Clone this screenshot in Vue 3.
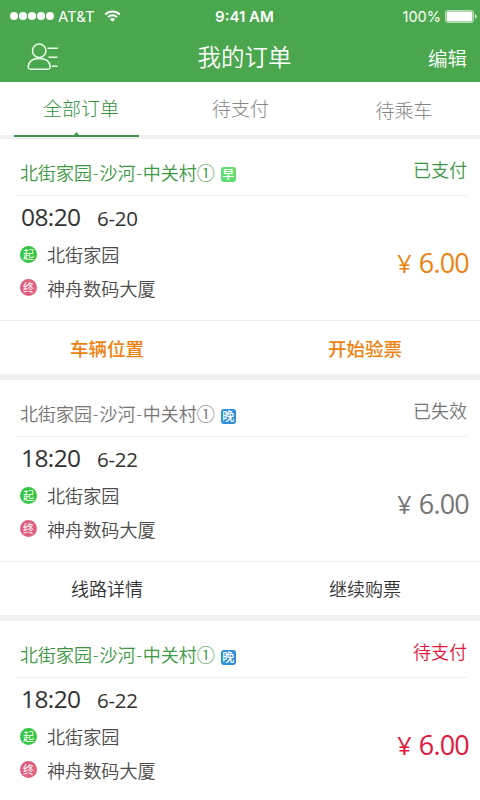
<script setup>
import { ref } from 'vue'

const tabs = ['全部订单', '待支付', '待乘车']
const active = ref(0)

const orders = ref([
  {
    id: 1, theme: 'paid', status: '已支付', shift: '早', time: '08:20', date: '6-20',
    actions: ['车辆位置', '开始验票']
  },
  {
    id: 2, theme: 'expired', status: '已失效', shift: '晚', time: '18:20', date: '6-22',
    actions: ['线路详情', '继续购票']
  },
  {
    id: 3, theme: 'unpaid', status: '待支付', shift: '晚', time: '18:20', date: '6-22',
    actions: []
  }
])
const route = ['北街家园', '沙河', '中关村①']
</script>

<template>
  <div class="page">
    <header class="header">
      <div class="status-bar">
        <div class="carrier">
          <i v-for="n in 5" :key="n" class="dot"></i>
          <span class="carrier-name">AT&amp;T</span>
          <svg class="wifi" viewBox="0 0 17 12">
            <path d="M1.2 4.5a10.4 10.4 0 0 1 14.6 0M3.9 7.1a6.6 6.6 0 0 1 9.2 0" fill="none" stroke="#fff" stroke-width="1.8" />
            <path d="M8.5 11.8L5.9 9.2a3.7 3.7 0 0 1 5.2 0z" fill="#fff" />
          </svg>
        </div>
        <div class="clock">9:41 AM</div>
        <div class="power">
          <span>100%</span>
          <svg class="battery" viewBox="0 0 32 13">
            <rect x=".5" y=".5" width="28" height="12" rx="2.2" fill="none" stroke="#b9e3ba" />
            <rect x="1.6" y="1.6" width="25.8" height="9.8" rx="1.2" fill="#fff" />
            <path d="M30 4.3q1.8 .6 1.8 2.2t-1.8 2.2z" fill="#d9f0da" />
          </svg>
        </div>
      </div>
      <div class="nav">
        <svg class="user" viewBox="0 0 32 28" fill="none" stroke="#e9ffe9" stroke-width="1.5">
          <circle cx="12.2" cy="7.7" r="6.7" />
          <path d="M3.5 26.2C1.8 26.2 1 25 1.2 23.4C1.9 18.4 6 15.6 12.2 15.6S22.5 18.4 23.2 23.4C23.4 25 22.6 26.2 20.9 26.2Z" />
          <path d="M20.5 5.3H31M21.5 14.2H30.5M24.8 23.2H30.5" />
        </svg>
        <h1>我的订单</h1>
        <span class="edit">编辑</span>
      </div>
    </header>

    <nav class="tabs">
      <div
        v-for="(tab, i) in tabs"
        :key="tab"
        class="tab"
        :class="{ active: active === i }"
        @click="active = i"
      >
        <span>{{ tab }}</span>
      </div>
    </nav>

    <section v-for="o in orders" :key="o.id" class="order" :class="o.theme">
      <div class="order-head">
        <div class="route">
          <template v-for="(stop, i) in route" :key="stop">
            <span v-if="i" class="dash">-</span>{{ stop }}
          </template>
        </div>
        <span class="shift" :class="o.shift === '早' ? 'morning' : 'evening'">{{ o.shift }}</span>
        <span class="status">{{ o.status }}</span>
      </div>
      <div class="order-body">
        <div class="trip">
          <div class="when">
            <span class="time">{{ o.time }}</span>
            <span class="date">{{ o.date }}</span>
          </div>
          <div class="stop"><i class="mark start">起</i>北街家园</div>
          <div class="stop"><i class="mark end">终</i>神舟数码大厦</div>
        </div>
        <div class="price"><span class="yen">¥</span>6.00</div>
      </div>
      <div v-if="o.actions.length" class="order-foot">
        <span v-for="a in o.actions" :key="a">{{ a }}</span>
      </div>
    </section>
  </div>
</template>

<style>
body {
  margin: 0;
  background: #f0f0f0;
}
</style>

<style scoped>
.page {
  width: 480px;
  height: 800px;
  overflow: hidden;
  background: #f0f0f0;
  font-family: 'Open Sans', 'Noto Sans CJK SC', sans-serif;
  font-weight: 350;
  color: #333;
}

.header {
  height: 82px;
  background: #4aa74d;
  color: #fff;
}

.status-bar {
  display: grid;
  grid-template-columns: 1fr auto 1fr;
  align-items: center;
  height: 32px;
  padding: 0 3px 0 10px;
  font-family: Inter, sans-serif;
  font-size: 14.5px;
  font-weight: 400;
}

.carrier,
.power {
  display: flex;
  align-items: center;
}

.dot {
  width: 8px;
  height: 8px;
  margin-right: 1px;
  border-radius: 50%;
  background: #fff;
}

.carrier-name {
  margin-left: 3px;
  font-size: 15px;
}

.wifi {
  width: 17px;
  height: 12px;
  margin-left: 9px;
}

.clock {
  padding-left: 2px;
  font-size: 15px;
  font-weight: 600;
}

.power {
  justify-content: flex-end;
  gap: 4px;
}

.battery {
  width: 32px;
  height: 13px;
}

.nav {
  display: grid;
  grid-template-columns: 1fr auto 1fr;
  align-items: center;
  height: 50px;
  padding: 0 13px 0 27px;
}

.user {
  width: 32px;
  height: 28px;
}

h1 {
  margin: 0 0 0 -5px;
  font-size: 23.5px;
  font-weight: 350;
  line-height: 50px;
}

.edit {
  justify-self: end;
  font-size: 19.5px;
}

.tabs {
  display: grid;
  grid-template-columns: 125px 203px 1fr;
  height: 53px;
  margin-bottom: 4px;
  padding: 0 14px;
  background: #fff;
}

.tab {
  position: relative;
  height: 53px;
  color: #868686;
  font-size: 19px;
  font-weight: 300;
  line-height: 55px;
  text-align: center;
}

.tab:last-child {
  line-height: 59px;
}

.tab.active {
  color: #34913f;
}

.tab.active span {
  margin-left: 9px;
}

.tab.active::before,
.tab.active::after {
  content: '';
  position: absolute;
  background: #3f9650;
}

.tab.active::before {
  right: 0;
  bottom: -2px;
  left: 0;
  height: 2px;
}

.tab.active::after {
  bottom: 0;
  left: 60px;
  width: 5px;
  height: 3px;
  clip-path: polygon(50% 0, 100% 100%, 0 100%);
}

.order {
  height: 235px;
  margin-bottom: 6px;
  background: #fff;
}

.order-head {
  display: flex;
  align-items: center;
  height: 56px;
  margin: 0 13px 0 16px;
  padding-left: 4px;
  border-bottom: 1px solid #eee;
}

.route {
  padding-top: 12px;
  color: #3c9843;
  font-size: 18px;
  line-height: 27px;
  white-space: nowrap;
}

.dash {
  padding: 0 .8px;
}

.shift {
  width: 15px;
  height: 15px;
  margin: 14px 0 0 6px;
  border-radius: 3px;
  color: #fff;
  font-size: 12px;
  font-weight: 500;
  line-height: 16px;
  text-align: center;
}

.morning {
  background: #62dd70;
}

.evening {
  margin-top: 16px;
  background: #2d8fdc;
}

.status {
  margin: 4px 0 0 auto;
  color: #3c9843;
  font-size: 18px;
}

.order-body {
  display: flex;
  justify-content: space-between;
  height: 124px;
  padding: 0 11px 0 20px;
}

.when {
  display: flex;
  align-items: baseline;
  height: 41.5px;
  font-weight: 400;
  line-height: 41px;
}

.time {
  width: 76px;
  padding-left: 1px;
  box-sizing: border-box;
  font-size: 24.5px;
  letter-spacing: -.6px;
}

.date {
  padding-left: 1px;
  font-size: 20.5px;
  letter-spacing: -.3px;
}

.stop {
  display: flex;
  align-items: center;
  height: 33.5px;
  color: #4b4b4b;
  font-size: 18.1px;
}

.mark {
  width: 17px;
  height: 17px;
  margin-right: 10px;
  border-radius: 50%;
  color: #fff;
  font-size: 11px;
  font-style: normal;
  font-weight: 400;
  line-height: 18px;
  text-align: center;
}

.start {
  background: #35c643;
}

.end {
  background: #e0607f;
}

.price {
  color: #ee8210;
  font-size: 27px;
  font-weight: 400;
  letter-spacing: -.8px;
  line-height: 134px;
}

.yen {
  margin-right: 8px;
  font-size: 25px;
}

.order-foot {
  display: flex;
  height: 53px;
  padding-left: 6px;
  border-top: 1px solid #eee;
  color: #ee8210;
  font-size: 18.5px;
  font-weight: 500;
  line-height: 55px;
}

.order-foot span {
  flex: 0 0 202px;
  text-align: center;
}

.order-foot span + span {
  margin-left: 56px;
}

.expired .route,
.expired .status,
.expired .price {
  color: #757575;
}

.expired .order-foot {
  color: #333;
  font-size: 18px;
  font-weight: 350;
}

.unpaid .status,
.unpaid .price {
  color: #e3163c;
}
</style>
